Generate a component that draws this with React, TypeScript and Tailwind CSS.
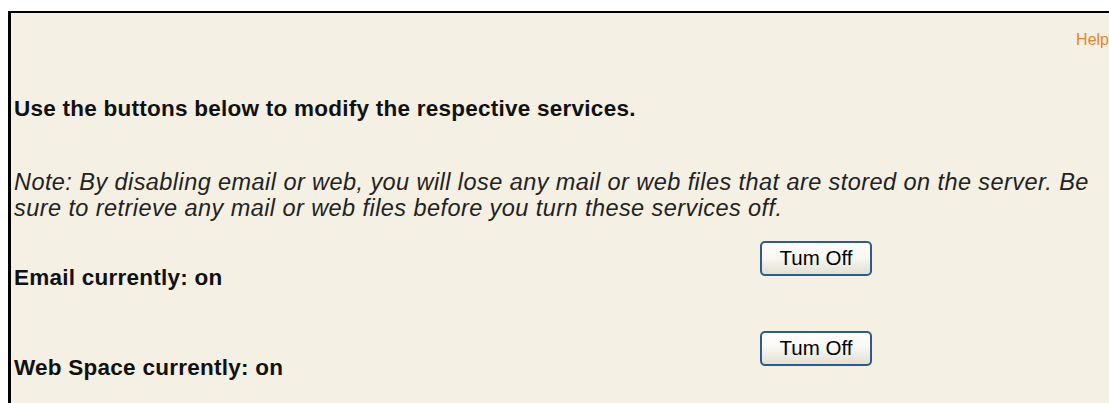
import React from 'react';

const services = [
  { label: 'Email currently: on' },
  { label: 'Web Space currently: on' },
];

function TurnOffButton() {
  return (
    <button
      type="button"
      className="h-[35px] w-[112px] rounded-[5px] border-2 border-[#2d5c8c] bg-gradient-to-b from-white via-[#f7f6f1] to-[#e3e0d3] text-[20.5px] leading-none text-black"
    >
      Tum Off
    </button>
  );
}

export default function App() {
  return (
    <div className="min-h-[403px] overflow-hidden bg-white pl-[8px] pt-[11px] font-['Liberation_Sans',Arial,sans-serif] text-[22.5px] leading-[26px] text-black">
      <div className="min-h-[392px] w-[1110px] border-l-[3px] border-t-[2px] border-black bg-[#f4f0e3] pl-[3px] pt-[17px]">
        <div className="w-[1095px] text-right text-[16px] leading-[20px] text-[#e5852a]">Help</div>

        <p className="mt-[46px] font-bold tracking-[0.25px] text-[#111]">
          Use the buttons below to modify the respective services.
        </p>

        <p className="mt-[47px] w-[1095px] text-[23.5px] leading-[26px] tracking-[0.43px] italic text-[#222]">
          Note: By disabling email or web, you will lose any mail or web files that are stored on the server. Be
          sure to retrieve any mail or web files before you turn these services off.
        </p>

        <div className="mt-[20px] flex flex-col gap-[40px]">
          {services.map((s) => (
            <div key={s.label} className="flex items-start">
              <div className="w-[746px] pt-[24px] font-bold tracking-[0.25px] text-[#111]">{s.label}</div>
              <TurnOffButton />
            </div>
          ))}
        </div>
      </div>
    </div>
  );
}
